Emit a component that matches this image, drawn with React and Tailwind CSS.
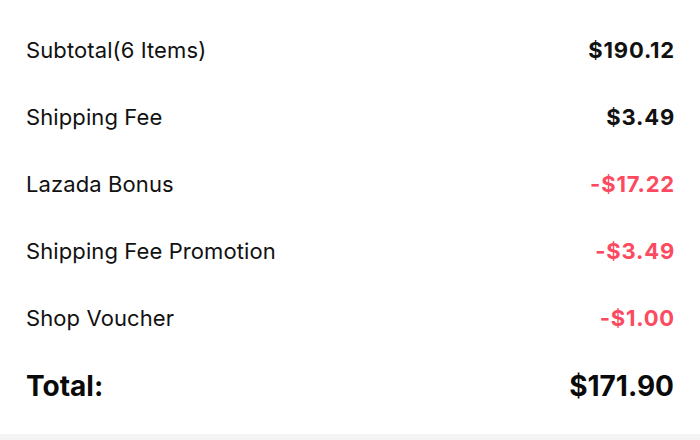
import React from 'react';

const rows = [
    { label: 'Subtotal(6 Items)', value: '$190.12' },
    { label: 'Shipping Fee', value: '$3.49' },
    { label: 'Lazada Bonus', value: '-$17.22', discount: true },
    { label: 'Shipping Fee Promotion', value: '-$3.49', discount: true },
    { label: 'Shop Voucher', value: '-$1.00', discount: true },
];

export default function App() {
    return (
        <div className="w-[700px] h-[440px] bg-[#f4f4f4] flex flex-col" style={{ fontFamily: 'Inter, "Noto Sans", sans-serif' }}>
            <div className="bg-white h-[434px] pt-[17px] px-[26px]">
                {rows.map(row => (
                    <div key={row.label} className="h-[67px] flex items-center justify-between">
                        <span className="text-[22px] text-[#111] tracking-[0.1px]">{row.label}</span>
                        <span className={`text-[22px] font-bold tracking-[0.8px] -mr-[1px] ${row.discount ? 'text-[#fc4a60]' : 'text-[#111]'}`}>{row.value}</span>
                    </div>
                ))}
                <div className="h-[67px] flex items-center justify-between">
                    <span className="text-[28px] font-bold text-[#0a0a0a]">Total:</span>
                    <span className="text-[28px] font-bold text-[#0a0a0a]">$171.90</span>
                </div>
            </div>
        </div>
    );
}
